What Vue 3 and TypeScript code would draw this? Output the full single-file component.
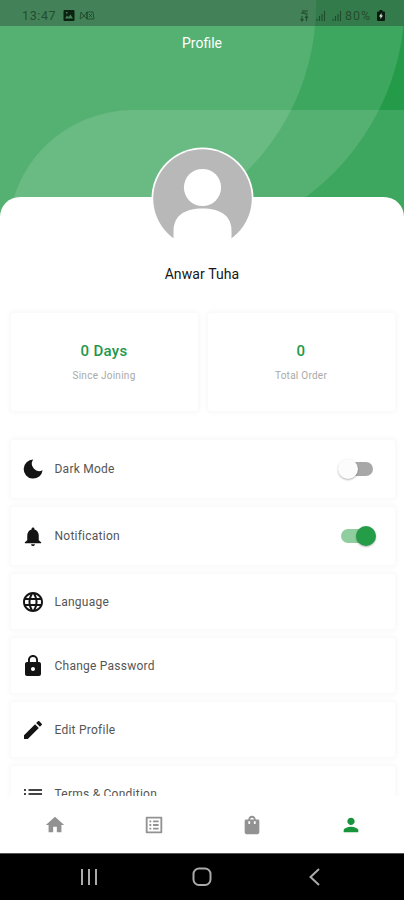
<script setup lang="ts">
import { ref } from 'vue'

interface MenuRow {
  id: string
  label: string
  icon: string
  toggle?: boolean
}

const icons: Record<string, string> = {
  moon: 'M12.200 2.600A9.500 9.500 0 1 0 21.600 13.200 7.300 7.300 0 0 1 12.200 2.600z',
  bell: 'M12 22c1.1 0 2-.9 2-2h-4a2 2 0 0 0 2 2zm6-6v-5c0-3.07-1.64-5.64-4.5-6.32V4a1.5 1.5 0 0 0-3 0v.68C7.63 5.36 6 7.92 6 11v5l-2.500 2v1h17v-1l-2.500-2z',
  globe: 'M11.99 2C6.47 2 2 6.48 2 12s4.47 10 9.99 10C17.52 22 22 17.52 22 12S17.52 2 11.99 2zm6.93 6h-2.95a15.65 15.65 0 0 0-1.38-3.56A8.03 8.03 0 0 1 18.92 8zM12 4.04c.83 1.2 1.48 2.53 1.91 3.96h-3.82c.43-1.43 1.08-2.76 1.91-3.96zM4.26 14C4.1 13.36 4 12.69 4 12s.1-1.36.26-2h3.38c-.08.66-.14 1.32-.14 2s.06 1.34.14 2H4.26zm.82 2h2.95c.32 1.25.78 2.45 1.38 3.56A7.99 7.99 0 0 1 5.08 16zm2.95-8H5.08a7.99 7.99 0 0 1 4.33-3.56A15.65 15.65 0 0 0 8.03 8zM12 19.96c-.83-1.2-1.48-2.53-1.91-3.96h3.82c-.43 1.43-1.08 2.76-1.91 3.96zM14.34 14H9.66c-.09-.66-.16-1.32-.16-2s.07-1.35.16-2h4.68c.09.65.16 1.32.16 2s-.07 1.34-.16 2zm.25 5.56c.6-1.11 1.06-2.31 1.38-3.56h2.95a8.03 8.03 0 0 1-4.33 3.56zM16.36 14c.08-.66.14-1.32.14-2s-.06-1.34-.14-2h3.38c.16.64.26 1.31.26 2s-.1 1.36-.26 2h-3.38z',
  lock: 'M18 8h-1V6c0-2.76-2.24-5-5-5S7 3.24 7 6v2H6c-1.1 0-2 .9-2 2v10c0 1.1.9 2 2 2h12c1.1 0 2-.9 2-2V10c0-1.1-.9-2-2-2zm-6 9c-1.1 0-2-.9-2-2s.9-2 2-2 2 .9 2 2-.9 2-2 2zm3.1-9H8.9V6a3.1 3.1 0 0 1 6.2 0v2z',
  pencil: 'M3 17.25V21h3.75L17.81 9.94l-3.75-3.75L3 17.25zM20.71 7.04a1 1 0 0 0 0-1.41l-2.34-2.34a1 1 0 0 0-1.41 0l-1.83 1.83 3.75 3.75 1.83-1.83z',
  list: 'M3 13h2v-2H3v2zm0 4h2v-2H3v2zm0-8h2V7H3v2zm4.500 4H21v-2H7.500v2zm0 4H21v-2H7.500v2zm0-10v2H21V7H7.500z',
  home: 'M10 20v-6h4v6h5v-8h3L12 3 2 12h3v8z',
  orders: 'M19 5v14H5V5h14m1.100-2H3.900c-.5 0-.9.4-.9.9v16.200c0 .4.4.9.9.9h16.200c.4 0 .9-.5.9-.9V3.900c0-.5-.5-.9-.9-.9zM11 7h6v2h-6V7zm0 4h6v2h-6v-2zm0 4h6v2h-6zM7 7h2v2H7zm0 4h2v2H7zm0 4h2v2H7z',
  bag: 'M20 6h-4c0-2.200-1.800-4-4-4S8 3.800 8 6H5.500Q4 6 4 7.500V20c0 1.100.9 2 2 2h12c1.100 0 2-.9 2-2V7.500Q20 6 18.500 6zm-10 4c0 .55-.45 1-1 1s-1-.45-1-1V8h2v2zm2-6c1.100 0 2 .9 2 2h-4c0-1.100.9-2 2-2zm4 6c0 .55-.45 1-1 1s-1-.45-1-1V8h2v2z',
  person: 'M12 12c2.210 0 4-1.790 4-4s-1.790-4-4-4-4 1.790-4 4 1.790 4 4 4zm0 2c-2.670 0-8 1.340-8 4v2h16v-2c0-2.660-5.330-4-8-4z',
}

const stats = [
  { value: '0 Days', label: 'Since Joining' },
  { value: '0', label: 'Total Order' },
]

const rows: MenuRow[] = [
  { id: 'dark', label: 'Dark Mode', icon: 'moon', toggle: true },
  { id: 'notify', label: 'Notification', icon: 'bell', toggle: true },
  { id: 'language', label: 'Language', icon: 'globe' },
  { id: 'password', label: 'Change Password', icon: 'lock' },
  { id: 'edit', label: 'Edit Profile', icon: 'pencil' },
  { id: 'terms', label: 'Terms & Condition', icon: 'list' },
]

const toggles = ref<Record<string, boolean>>({ dark: false, notify: true })
const tabs = ['home', 'orders', 'bag', 'person']
const activeTab = ref('person')

function flip(row: MenuRow) {
  if (row.toggle) toggles.value[row.id] = !toggles.value[row.id]
}
</script>

<template>
  <div class="phone">
    <main class="screen">
      <header class="hero">
        <svg class="hero-bg" viewBox="0 0 404 225">
          <rect width="404" height="225" fill="#249b49" />
          <path d="M0 0H405A245 245 0 0 1 283 212L260 225H0z" />
          <path d="M0 0H316A236 236 0 0 1 194 211L170 225H0z" />
          <path d="M8 235a125 125 0 0 1 125-125h271v125z" />
        </svg>
        <div class="status">
          <span class="clock">13:47</span>
          <svg class="st-left" width="34" height="12" viewBox="0 0 34 12">
            <path fill-rule="evenodd" d="M1.500 0h9q1 0 1 1v9q0 1-1 1h-9q-1 0-1-1V1q0-1 1-1zM2 8.500h8L7.500 4.500 5.500 7 4 5.500zM3 2v1.500h1.500V2z" />
            <g fill="none" stroke="#16381f" stroke-width=".9" opacity=".75">
              <path d="M18 2l-1 7 4-3 3-4v7l-4-4zM24 2h6l1 7h-7zM26 4l3 3M29 4l-3 3" />
            </g>
          </svg>
          <span class="spacer"></span>
          <svg class="st-right" width="45" height="12" viewBox="0 0 45 12">
            <g fill="none" stroke="#1b3f25" stroke-width="1.100" opacity=".8">
              <path d="M3 0v4M1 3h3M5 0v4h3M6 1h2M2 6v5M.5 9L2 11l1.500-2M6.500 11V6M5 8l1.500-2L8 8" />
              <path d="M17 9v2M19.500 6v5M22 4v7M24.500 1v10M33 9v2M35.500 6v5M38 4v7M40.500 1v10" />
            </g>
          </svg>
          <span class="percent">80%</span>
          <svg width="8" height="11" viewBox="0 0 8 11">
            <path d="M2.500 0h3v1.500H7q1 0 1 1V10q0 1-1 1H1q-1 0-1-1V2.500q0-1 1-1h1.500z" fill="#081b0d" />
            <path d="M4.500 3L2 6.500h1.500L3.300 9 6 5.500H4.500z" fill="#d9eadc" />
          </svg>
        </div>
        <h1>Profile</h1>
      </header>

      <section class="panel">
        <svg class="avatar" width="103" height="103" viewBox="0 0 103 103">
          <circle cx="51.500" cy="51.500" r="51" fill="#fff" />
          <circle cx="51.500" cy="51.500" r="49.300" fill="#b8b8b8" />
          <circle cx="51.500" cy="40.500" r="18.600" fill="#fff" />
          <path d="M22.500 103V84c0-16 12-22.500 29-22.500s29 6.500 29 22.500v19z" fill="#fff" />
        </svg>
        <h2>Anwar Tuha</h2>

        <div class="stats">
          <div v-for="s in stats" :key="s.label" class="card stat">
            <strong>{{ s.value }}</strong>
            <span>{{ s.label }}</span>
          </div>
        </div>

        <div class="menu">
          <div
            v-for="row in rows"
            :key="row.id"
            class="card row"
            :class="{ tall: row.toggle }"
            @click="flip(row)"
          >
            <svg class="row-icon" :class="row.icon" viewBox="0 0 24 24"><path :d="icons[row.icon]" /></svg>
            <span class="row-label">{{ row.label }}</span>
            <span v-if="row.toggle" class="switch" :class="{ on: toggles[row.id] }"><i></i></span>
          </div>
        </div>
      </section>
    </main>

    <nav class="tabs">
      <button
        v-for="t in tabs"
        :key="t"
        :class="{ active: t === activeTab }"
        @click="activeTab = t"
      >
        <svg viewBox="0 0 24 24"><path :d="icons[t]" /></svg>
      </button>
    </nav>

    <footer class="system">
      <svg width="18" height="18" viewBox="0 0 18 18"><path d="M2 1v16M9 1v16M16 1v16" /></svg>
      <svg width="20" height="20" viewBox="0 0 20 20"><rect x="1.500" y="1.500" width="17" height="16.500" rx="5.500" /></svg>
      <svg width="18" height="18" viewBox="0 0 18 18"><path d="M13 1L4.500 9l8.500 8" /></svg>
    </footer>
  </div>
</template>

<style>
body {
  margin: 0;
  background: #fff;
}
</style>

<style scoped>
.phone {
  width: 404px;
  height: 900px;
  display: flex;
  flex-direction: column;
  overflow: hidden;
  background: #fff;
  font-family: Roboto, 'Liberation Sans', sans-serif;
}
.screen {
  height: 796px;
  flex: none;
  overflow: hidden;
}
.hero {
  position: relative;
  height: 197px;
}
.hero-bg {
  position: absolute;
  top: 0;
  left: 0;
  width: 404px;
  height: 225px;
  fill: rgba(255, 255, 255, 0.12);
}
.status {
  position: relative;
  box-sizing: border-box;
  height: 26px;
  padding: 5px 19px 0 22px;
  display: flex;
  align-items: center;
  background: rgba(30, 30, 35, 0.32);
  color: #244c2f;
}
.clock,
.percent {
  font-size: 12.5px;
  line-height: 14px;
}
.clock {
  width: 41px;
  letter-spacing: 0.6px;
}
.percent {
  width: 32px;
  letter-spacing: 1px;
}
.st-left {
  fill: #0b2211;
}
.spacer {
  flex: 1;
}
h1 {
  position: relative;
  margin: 9px 0 0;
  text-align: center;
  color: #fff;
  font-size: 14px;
  line-height: 17px;
  font-weight: 400;
  letter-spacing: 0;
}
.panel {
  position: relative;
  height: 640px;
  background: #fff;
  border-radius: 20px 20px 0 0;
  display: flex;
  flex-direction: column;
  align-items: center;
}
.avatar {
  display: block;
  margin-top: -50px;
}
h2 {
  margin: 15px 0 0;
  font-size: 14px;
  line-height: 18px;
  font-weight: 400;
  letter-spacing: 0.1px;
  color: #161616;
}
.stats {
  width: 384px;
  margin: 30px 0 0 1px;
  display: grid;
  grid-template-columns: 1fr 1fr;
  gap: 10px;
}
.card {
  box-sizing: border-box;
  background: #fff;
  border-radius: 3px;
  box-shadow: 0 0 5px 2px rgba(0, 0, 0, 0.03);
}
.stat {
  height: 98px;
  display: flex;
  flex-direction: column;
  align-items: center;
  padding-top: 28px;
}
.stat strong {
  color: #23974a;
  font-size: 15px;
  line-height: 20px;
  font-weight: 500;
  letter-spacing: 0.3px;
}
.stat span {
  margin-top: 8px;
  color: #a9a9a9;
  font-size: 10px;
  line-height: 14px;
  letter-spacing: 0.26px;
}
.menu {
  width: 384px;
  margin: 29px 0 0 1px;
  display: flex;
  flex-direction: column;
  gap: 9px;
}
.row {
  height: 55px;
  padding: 0 19px 0 10px;
  display: flex;
  align-items: center;
}
.row.tall {
  height: 58px;
}
.row-icon {
  width: 24px;
  height: 24px;
  fill: #141414;
}
.row-icon.bell {
  width: 24px;
  height: 23px;
}
.row-icon.list {
  fill: #444;
}
.row-label {
  flex: 1;
  margin-left: 10px;
  color: #555;
  font-size: 12px;
  line-height: 16px;
  letter-spacing: 0.24px;
}
.switch {
  box-sizing: border-box;
  width: 32px;
  height: 14px;
  margin-right: 3px;
  display: flex;
  align-items: center;
  border-radius: 7px;
  background: #a8a8a8;
}
.switch i {
  flex: none;
  width: 20px;
  height: 20px;
  margin-left: -3px;
  border-radius: 50%;
  background: #fcfcfc;
  box-shadow: 0 1px 2px rgba(0, 0, 0, 0.3);
}
.switch.on {
  background: #91ce9f;
}
.switch.on i {
  margin-left: 15px;
  background: #249c48;
}
.tabs {
  height: 57px;
  flex: none;
  box-sizing: border-box;
  padding: 0 4px 0 6px;
  display: grid;
  grid-template-columns: repeat(4, 1fr);
  background: #fff;
}
.tabs button {
  border: 0;
  padding: 0;
  background: none;
  display: flex;
  align-items: center;
  justify-content: center;
}
.tabs svg {
  width: 22px;
  height: 22px;
  fill: #929292;
}
.tabs .active svg {
  fill: #18943c;
}
.system {
  height: 47px;
  flex: none;
  box-sizing: border-box;
  border-top: 1px solid #555;
  padding: 0 80px 1px;
  display: flex;
  align-items: center;
  justify-content: space-between;
  background: #000;
}
.system svg {
  fill: none;
  stroke: #aaa;
  stroke-width: 2;
}
</style>
